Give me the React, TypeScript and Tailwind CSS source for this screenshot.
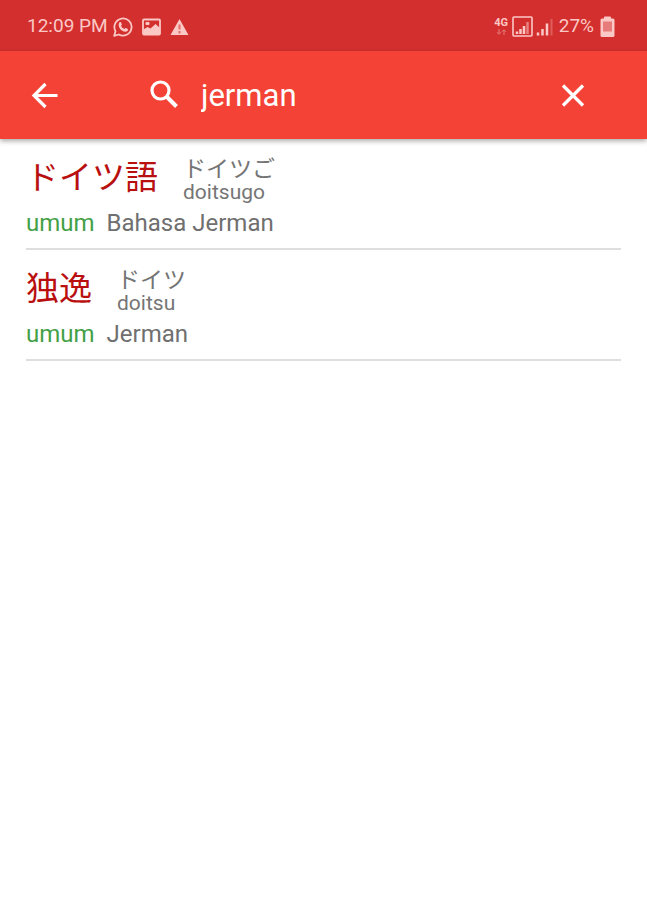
import React, { useState } from 'react'

const entries = [
  { word: 'ドイツ語', kana: 'ドイツご', romaji: 'doitsugo', category: 'umum', meaning: 'Bahasa Jerman' },
  { word: '独逸', kana: 'ドイツ', romaji: 'doitsu', category: 'umum', meaning: 'Jerman' }
]

function StatusBar() {
  return (
    <div className="flex h-[51px] items-center justify-between bg-[#d32f2f] pl-[27px] pr-8 pt-0.5 text-[19px] text-[#fbc8c5]">
      <div className="flex items-center">
        <span className="mr-[5px] whitespace-nowrap">12:09 PM</span>

        {/* WhatsApp */}
        <svg className="mr-[9px] size-5" viewBox="0 0 20 20" fill="none" stroke="currentColor">
          <path d="M1.2 18.8l1.3-4.6A8.6 8.6 0 1 1 5.8 17.5z" strokeWidth="1.8" strokeLinejoin="round" />
          <path d="M6.3 5.4c.5-.6 1.4-.6 1.7 0l.9 1.9c.1.4-.1.8-.9 1.5.8 1.500 1.800 2.500 3.300 3.200.8-.9 1.100-1.100 1.600-.9l1.800.9c.5.3.5 1 .1 1.600-1.300 1.700-3.400 1.600-5.900-.1C6.100 11.500 4.800 7.900 6.300 5.400z" fill="currentColor" stroke="none" />
        </svg>

        {/* Picture */}
        <svg className="mr-[9px] h-[18px] w-[19px]" viewBox="0 0 19 18" fill="none">
          <rect x="1" y="1.5" width="17" height="15" rx="1" stroke="currentColor" strokeWidth="1.8" />
          <rect x="3.5" y="4" width="4" height="3" rx="1" fill="currentColor" />
          <path d="M1.5 11.5l4-2.500 3 1.500 5-4.500 4.500 4V16.500H1.500z" fill="currentColor" />
        </svg>

        {/* Warning */}
        <svg className="h-[18px] w-[19px]" viewBox="0 0 19 18">
          <path d="M9.5 1L18.5 17H.5z" fill="currentColor" />
          <path d="M9.5 6.5v5M9.5 13v2.500" stroke="#d32f2f" strokeWidth="2" strokeOpacity=".6" />
        </svg>
      </div>

      <div className="flex items-center">
        {/* Mobile data */}
        <div className="flex w-[15px] flex-col items-center">
          <span className="text-[11px] font-bold leading-[10px]">4G</span>
          <svg className="mt-px h-[6px] w-[11px] opacity-50" viewBox="0 0 11 6" fill="none" stroke="currentColor">
            <path d="M3 0v5M1 3.2l2 2 2-2M8 6V1M6 2.8l2-2 2 2" />
          </svg>
        </div>

        {/* Signal, first SIM */}
        <svg className="ml-[3px] size-[21px]" viewBox="0 0 21 21" fill="none" stroke="currentColor">
          <rect x="1" y="1" width="19" height="19" rx="1" strokeWidth="1.6" />
          <path d="M5 15.5V18M8.5 13v5M12 10v8" strokeWidth="2.5" />
          <path d="M15.5 6v12" strokeWidth="2.5" strokeOpacity=".55" />
        </svg>

        {/* Signal, second SIM */}
        <svg className="ml-[3px] h-[18px] w-[17px]" viewBox="0 0 17 18" fill="none" stroke="currentColor">
          <path d="M2 14.5v3M6.5 11v6.500M11 5.500v12" strokeWidth="2.5" />
          <path d="M15.5 1v16.500" strokeWidth="2" strokeOpacity=".3" />
        </svg>

        <span className="ml-[6px]">27%</span>

        {/* Battery */}
        <svg className="ml-[6px] h-[22px] w-[15px]" viewBox="0 0 15 22" fill="currentColor">
          <path d="M4 2.5V1.5Q4 .5 5 .5h5q1 0 1 1v1h2q1.500 0 1.500 1.500v15.500q0 1.500-1.500 1.500H2q-1.500 0-1.500-1.500V4Q.5 2.500 2 2.500z" />
          <path d="M3 5.5h9v10H3z" fill="#d32f2f" fillOpacity=".5" />
        </svg>
      </div>
    </div>
  )
}

export default function App() {
  const [query, setQuery] = useState('jerman')

  return (
    <div className="min-h-screen bg-white font-['Roboto','Noto_Sans_CJK_JP',sans-serif]">
      <StatusBar />

      <header className="relative flex h-[88px] items-center bg-[#f44336] pl-[31px] pr-[61px] text-white shadow-[0_2px_5px_rgba(0,0,0,0.35)]">
        <button type="button" aria-label="Kembali" className="shrink-0 cursor-pointer">
          <svg className="size-7" viewBox="0 0 28 28" fill="none" stroke="currentColor" strokeWidth="3.200">
            <path d="M26.500 14.500H4M14.500 3L3 14.500l11.500 11.500" />
          </svg>
        </button>

        <label htmlFor="search" aria-label="Cari" className="ml-[90px] shrink-0">
          <svg className="size-[30px]" viewBox="0 0 30 30" fill="none" stroke="currentColor">
            <circle cx="11.5" cy="10.5" r="8.5" strokeWidth="3.200" />
            <path d="M17.5 16.5l10 10" strokeWidth="4" />
          </svg>
        </label>

        <input
          id="search"
          type="text"
          value={query}
          onChange={(e) => setQuery(e.target.value)}
          className="ml-[18px] min-w-0 flex-1 bg-transparent pl-1 pt-0.5 text-[31px] leading-10 outline-none"
        />

        <button type="button" aria-label="Hapus" onClick={() => setQuery('')} className="shrink-0 cursor-pointer">
          <svg className="size-[26px]" viewBox="0 0 26 26" fill="none" stroke="currentColor" strokeWidth="3.200">
            <path d="M3 3.500l20 20M23 3.500L3 23.500" />
          </svg>
        </button>
      </header>

      <main>
        <ul className="px-[26px]" lang="ja">
          {entries.map((entry) => (
            <li key={entry.word} className="border-b-2 border-[#dedede] pb-[9px] pt-[19px]">
              <div className="flex gap-[25px]">
                <span className="text-[33px] leading-10 text-[#b90f0f]">{entry.word}</span>
                <div className="flex flex-col text-[#757575]">
                  <span className="text-[23px] leading-[23px]">{entry.kana}</span>
                  <span className="text-[21px] leading-[23px]">{entry.romaji}</span>
                </div>
              </div>
              <div className="mt-[3px] flex gap-3 text-2xl">
                <span className="text-[#43a047]">{entry.category}</span>
                <span className="text-[#6f6f6f]">{entry.meaning}</span>
              </div>
            </li>
          ))}
        </ul>
      </main>
    </div>
  )
}
